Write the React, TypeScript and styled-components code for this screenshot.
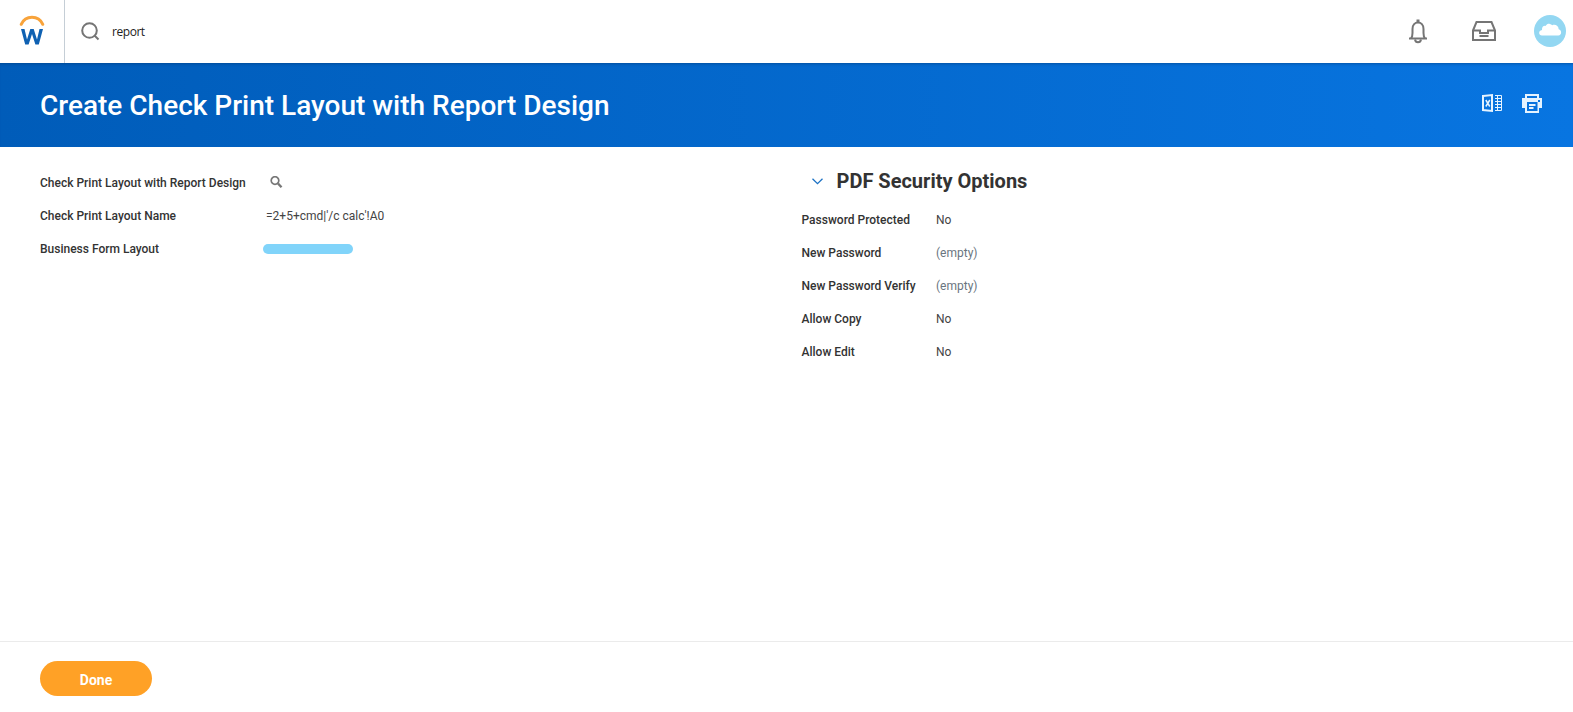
import React from 'react';
import styled, { createGlobalStyle } from 'styled-components';

const GlobalStyle = createGlobalStyle`
  * { box-sizing: border-box; }
  html, body { margin: 0; background: #fff; }
  body { font-family: Roboto, "Liberation Sans", sans-serif; font-size: 12px; color: #333; overflow: hidden; }
  svg { display: block; flex: none; }
`;

const Page = styled.div`
  display: flex;
  flex-direction: column;
  height: 712px;
`;

const TopBar = styled.header`
  display: flex;
  align-items: stretch;
  height: 63px;
`;

const LogoCell = styled.div`
  width: 65px;
  padding: 14px 0 0 18px;
  border-right: 1px solid #c5ced6;
`;

const Search = styled.div`
  flex: 1;
  display: flex;
  align-items: center;
  gap: 12px;
  padding: 0 0 1px 16px;
`;

const Query = styled.span`
  font: 12px/16px "Open Sans", "Noto Sans", sans-serif;
  letter-spacing: -0.45px;
  color: #222;
  padding-top: 1px;
`;

const TopActions = styled.div`
  display: flex;
  align-items: center;
  padding: 0 7px 1px 0;
`;

const InboxSlot = styled.div`
  margin: 0 37px 0 40px;
`;

const Banner = styled.section`
  display: flex;
  justify-content: space-between;
  height: 84px;
  padding: 0 30px 0 40px;
  background: linear-gradient(90deg, #005cb9 0%, #0875e1 100%);
  box-shadow: inset 0 3px 3px -2px rgba(0, 45, 95, 0.4);
`;

const Title = styled.h1`
  margin: 0;
  padding-top: 26px;
  font-size: 28px;
  line-height: 33px;
  font-weight: 500;
  color: #fff;
`;

const BannerActions = styled.div`
  display: flex;
  gap: 18px;
  padding-top: 29px;
`;

const Content = styled.main`
  flex: 1;
  display: grid;
  grid-template-columns: 761.5px 1fr;
  padding-left: 40px;
`;

const Column = styled.section<{ $top: number }>`
  padding-top: ${(p) => p.$top}px;
`;

const SectionHead = styled.div`
  display: flex;
  align-items: center;
  gap: 14px;
  height: 34px;
  padding-left: 10px;
  margin-bottom: 5px;
`;

const SectionTitle = styled.h2`
  margin: 0;
  font-size: 20px;
  line-height: 24px;
  font-weight: 700;
`;

const Field = styled.div<{ $label: number }>`
  display: grid;
  grid-template-columns: ${(p) => p.$label}px 1fr;
  align-items: center;
  height: 33px;
`;

const Label = styled.span`
  font-weight: 500;
  white-space: nowrap;
`;

const Value = styled.span<{ $muted?: boolean; $indent?: number }>`
  padding-left: ${(p) => p.$indent ?? 0}px;
  color: ${(p) => (p.$muted ? '#6a7580' : '#444')};
`;

const Redaction = styled.div`
  width: 90px;
  height: 10px;
  border-radius: 5px;
  background: #81d4fa;
`;

const Footer = styled.footer`
  height: 71px;
  padding: 19px 40px 0;
  border-top: 1px solid #ebebeb;
`;

const DoneButton = styled.button`
  display: block;
  width: 112px;
  height: 35px;
  padding: 2px 0 0;
  border: 0;
  border-radius: 18px;
  background: #ffa126;
  color: #fff;
  font: 700 14px/16px Roboto, sans-serif;
`;

const Logo = () => (
  <svg width="28" height="32" viewBox="0 0 28 32" fill="none">
    <path d="M3.200 10.300C5.200 6 9.200 3.300 14 3.300s8.800 2.700 10.800 7" stroke="#f8a33b" strokeWidth="3" strokeLinecap="round" />
    <path
      d="M3 15h3.500l2.500 10.500 3.300-10.500h3.400l3.300 10.500L21.500 15H25l-4.200 15.500h-3.400L14 20l-3.400 10.500H7.200z"
      fill="#0f61b2"
    />
  </svg>
);

const SearchIcon = () => (
  <svg width="19" height="19" viewBox="0 0 19 19" fill="none" stroke="#757575" strokeWidth="2">
    <circle cx="8.500" cy="8.500" r="7.300" />
    <path d="M13.500 13.500l4 4" />
  </svg>
);

const BellIcon = () => (
  <svg width="26" height="26" viewBox="0 0 26 26" fill="none" stroke="#757575" strokeWidth="2">
    <path d="M4 20.500h18" />
    <path d="M6 20.500c1.200-1.500 1.500-3 1.500-5.500V11c0-4 2.500-6.500 5.500-6.500s5.500 2.500 5.500 6.500v4c0 2.500.3 4 1.500 5.500" />
    <path d="M13 1.500v3" strokeWidth="3" />
    <path d="M10 21.500c.3 1.800 1.300 2.700 3 2.700s2.700-.9 3-2.700" />
  </svg>
);

const InboxIcon = () => (
  <svg width="26" height="26" viewBox="0 0 26 26" fill="none" stroke="#757575" strokeWidth="2">
    <path d="M2 12.500L5.500 4h15L24 12.500V22H2z" />
    <path d="M2 12.500h7v2.500h8v-2.500h7M8.500 18h9" />
  </svg>
);

const Avatar = () => (
  <svg width="32" height="32" viewBox="0 0 32 32">
    <circle cx="16" cy="16" r="16" fill="#93d7f2" />
    <path d="M8 20.500C4.500 20.500 4 15.500 8 15c-.3-3 1.500-4.500 3.700-4.100.8-1.700 2.600-2.300 4.100-2 1.100.2 1.900.7 2.400 1.300 3.200-1.200 6.300.5 6.500 4 3.300.4 3.300 6.300-.4 6.300z" fill="#fff" />
  </svg>
);

const ExcelIcon = () => (
  <svg width="22" height="22" viewBox="0 0 22 22" fill="none" stroke="#e5f3ff">
    <path d="M2 4l9-1v16L2 18z" strokeWidth="2" />
    <path d="M4.800 8l4 6.500M8.800 8l-4 6.500" strokeWidth="1.500" />
    <path d="M14 3.500h6.500v15H14M14 6.500h6M14 9.500h6M14 12.500h6M14 15.500h6M16.500 3.500v15" />
  </svg>
);

const PrintIcon = () => (
  <svg width="22" height="22" viewBox="0 0 22 22" fill="none">
    <path d="M4 2h14v4h3v10h-3v5H4v-5H1V6h3z" fill="#e5f3ff" />
    <path d="M6 4h10v2H6zM6 10h10.500v9H6zM17 8h2v2h-2z" fill="#0873de" />
    <path d="M8 12h6.500v2H8zM8 15h4.500v2H8z" fill="#e5f3ff" />
  </svg>
);

const LookupIcon = () => (
  <svg width="13" height="14" viewBox="0 0 13 14" fill="none" stroke="#777">
    <circle cx="5" cy="4.500" r="3.800" strokeWidth="1.700" />
    <path d="M8 7.500l3.500 3.700" strokeWidth="2.400" />
  </svg>
);

const Chevron = () => (
  <svg width="11" height="8" viewBox="0 0 11 8" fill="none">
    <path d="M.5 1.700l5 5 5-5" stroke="#1c72c4" strokeWidth="1.300" />
  </svg>
);

const securityFields = [
  { label: 'Password Protected', value: 'No' },
  { label: 'New Password', value: '(empty)', muted: true },
  { label: 'New Password Verify', value: '(empty)', muted: true },
  { label: 'Allow Copy', value: 'No' },
  { label: 'Allow Edit', value: 'No' },
];

export default function App() {
  return (
    <Page>
      <GlobalStyle />
      <TopBar>
        <LogoCell><Logo /></LogoCell>
        <Search>
          <SearchIcon />
          <Query>report</Query>
        </Search>
        <TopActions>
          <BellIcon />
          <InboxSlot><InboxIcon /></InboxSlot>
          <Avatar />
        </TopActions>
      </TopBar>
      <Banner>
        <Title>Create Check Print Layout with Report Design</Title>
        <BannerActions>
          <ExcelIcon />
          <PrintIcon />
        </BannerActions>
      </Banner>
      <Content>
        <Column $top={19}>
          <Field $label={223}>
            <Label>Check Print Layout with Report Design</Label>
            <Value $indent={7}><LookupIcon /></Value>
          </Field>
          <Field $label={223}>
            <Label>Check Print Layout Name</Label>
            <Value $indent={3}>=2+5+cmd|'/c calc'!A0</Value>
          </Field>
          <Field $label={223}>
            <Label>Business Form Layout</Label>
            <Redaction />
          </Field>
        </Column>
        <Column $top={17}>
          <SectionHead>
            <Chevron />
            <SectionTitle>PDF Security Options</SectionTitle>
          </SectionHead>
          {securityFields.map((f) => (
            <Field key={f.label} $label={134.5}>
              <Label>{f.label}</Label>
              <Value $muted={f.muted}>{f.value}</Value>
            </Field>
          ))}
        </Column>
      </Content>
      <Footer>
        <DoneButton>Done</DoneButton>
      </Footer>
    </Page>
  );
}
